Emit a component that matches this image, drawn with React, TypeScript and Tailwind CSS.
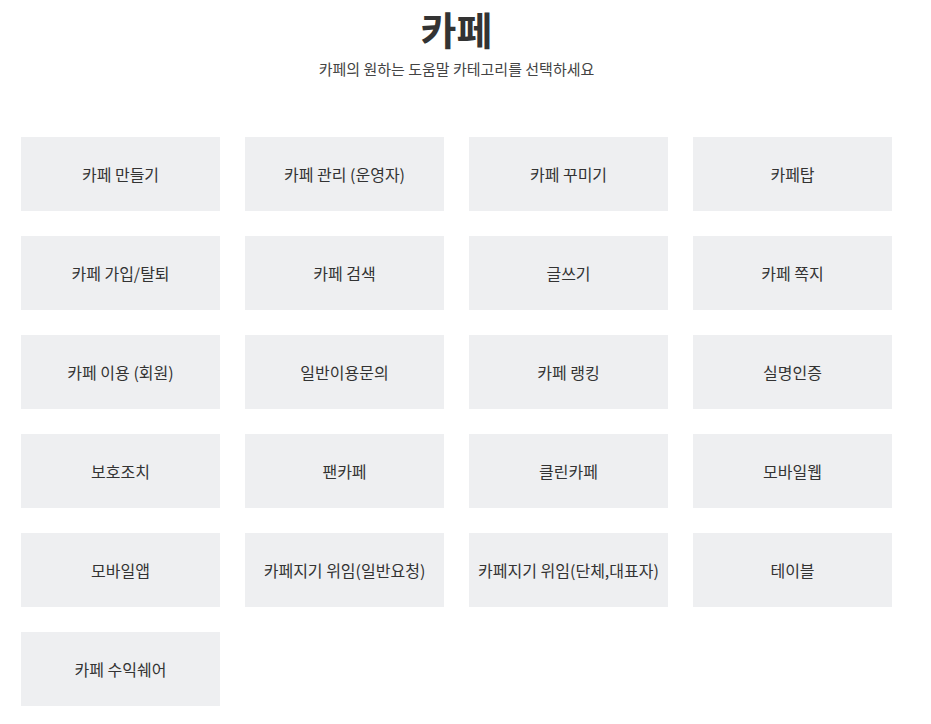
import React from 'react';

const categories = [
  '카페 만들기',
  '카페 관리 (운영자)',
  '카페 꾸미기',
  '카페탑',
  '카페 가입/탈퇴',
  '카페 검색',
  '글쓰기',
  '카페 쪽지',
  '카페 이용 (회원)',
  '일반이용문의',
  '카페 랭킹',
  '실명인증',
  '보호조치',
  '팬카페',
  '클린카페',
  '모바일웹',
  '모바일앱',
  '카페지기 위임(일반요청)',
  '카페지기 위임(단체,대표자)',
  '테이블',
  '카페 수익쉐어',
];

export default function App() {
  return (
    <div
      className="min-h-screen bg-white text-[#333]"
      style={{ fontFamily: '"Noto Sans CJK KR", "Noto Sans", sans-serif' }}
    >
      {/* Header */}
      <div className="w-[871px] ml-[21px] pt-[2px] text-center">
        <h1 className="text-[39px] font-bold leading-[52px] text-[#333]">카페</h1>
        <p className="mt-[4px] text-[15px] leading-[22px] text-[#444]">
          카페의 원하는 도움말 카테고리를 선택하세요
        </p>
      </div>

      {/* Category grid */}
      <div className="ml-[21px] mt-[57px] grid grid-cols-[repeat(4,199px)] gap-[25px] pb-[18px]">
        {categories.map((c) => (
          <div
            key={c}
            className="h-[74px] bg-[#eeeff1] flex items-center justify-center text-[16px] text-[#333] cursor-pointer"
          >
            {c}
          </div>
        ))}
      </div>
    </div>
  );
}
